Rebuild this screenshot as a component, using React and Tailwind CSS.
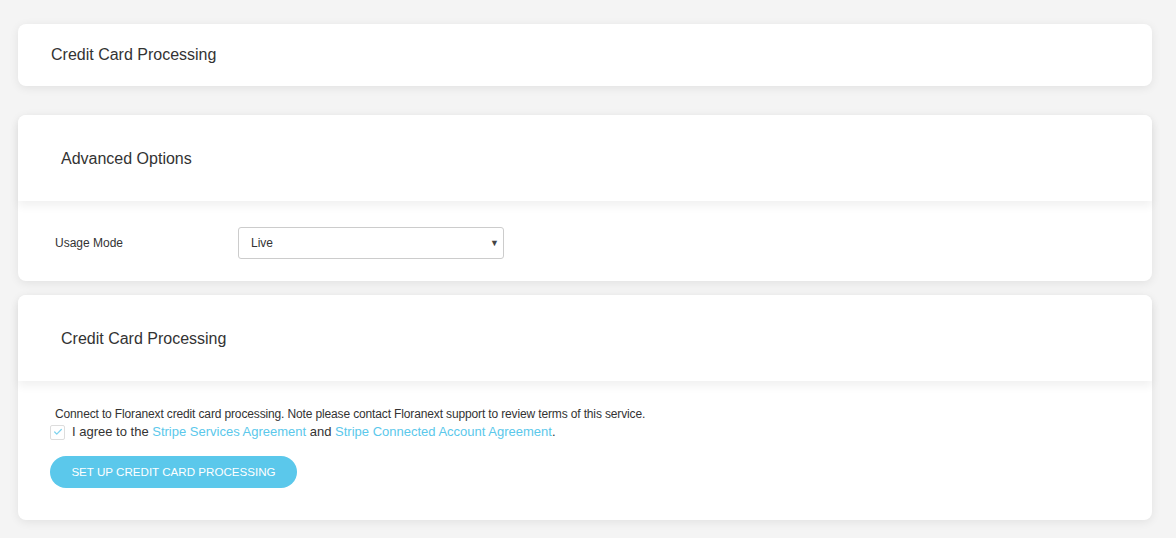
import { Check } from 'lucide-react'

const font = { fontFamily: '"Liberation Sans", Arial, sans-serif' }

function Card({ children, className = '' }) {
  return (
    <div className={`rounded-lg bg-white shadow-[0_2px_10px_rgba(0,0,0,0.08)] ${className}`}>
      {children}
    </div>
  )
}

function CardHeader({ title }) {
  return (
    <div className="relative z-10 flex h-[86px] items-center rounded-t-lg bg-white pl-[43px] pt-[1px] shadow-[0_5px_10px_rgba(0,0,0,0.06)]">
      <h2 className="text-[16px] text-[#333]">{title}</h2>
    </div>
  )
}

export default function App() {
  return (
    <div className="min-h-[538px] bg-[#f4f4f4] pl-[18px] pr-[24px] pt-[24px] pb-[18px] text-[#333]" style={font}>
      <Card className="flex h-[62px] items-center pl-[33px]">
        <h2 className="text-[16px] text-[#333]">Credit Card Processing</h2>
      </Card>

      <Card className="mt-[29px]">
        <CardHeader title="Advanced Options" />
        <div className="flex h-[80px] items-center pl-[37px] pt-[4px]">
          <span className="w-[183px] text-[12px] text-[#333]">Usage Mode</span>
          <div className="relative flex h-[32px] w-[266px] items-center rounded-[3px] border border-[#ccc] bg-white pl-[12px] text-[12px]">
            Live
            <span className="absolute right-[4px] top-[9px] text-[9px] text-[#444]">▼</span>
          </div>
        </div>
      </Card>

      <Card className="mt-[14px]">
        <CardHeader title="Credit Card Processing" />
        <div className="pl-[32px] pb-[32px] pt-[26px]">
          <p className="pl-[5px] text-[12px] leading-[14px] tracking-[-0.14px] text-[#333]">
            Connect to Floranext credit card processing. Note please contact Floranext support to review terms of this service.
          </p>
          <div className="mt-[2px] flex items-center gap-[7px] text-[13px] leading-[18px]">
            <span className="flex h-[15px] w-[15px] items-center justify-center rounded-[2px] border border-[#ddd] bg-white">
              <Check size={10} strokeWidth={3} className="text-[#7fd3ef]" />
            </span>
            <span>
              I agree to the <span className="text-[#5bc8eb]">Stripe Services Agreement</span> and{' '}
              <span className="text-[#5bc8eb]">Stripe Connected Account Agreement</span>.
            </span>
          </div>
          <button className="mt-[15px] h-[32px] w-[247px] rounded-full bg-[#5bc8eb] text-[11.6px] uppercase text-white">
            Set up credit card processing
          </button>
        </div>
      </Card>
    </div>
  )
}
